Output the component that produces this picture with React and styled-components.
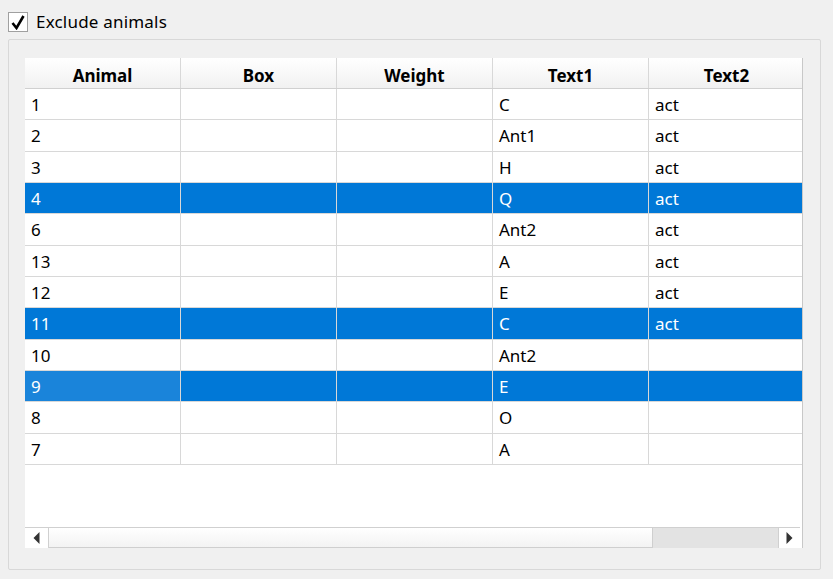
import React from "react";
import styled, { createGlobalStyle } from "styled-components";

const GlobalStyle = createGlobalStyle`
  body {
    margin: 0;
    background: #f0f0f0;
    font-family: "Noto Sans", "Open Sans", sans-serif;
    color: #000;
  }
`;

const columns = ["Animal", "Box", "Weight", "Text1", "Text2"];

const rows = [
  { animal: "1", text1: "C", text2: "act" },
  { animal: "2", text1: "Ant1", text2: "act" },
  { animal: "3", text1: "H", text2: "act" },
  { animal: "4", text1: "Q", text2: "act", selected: true },
  { animal: "6", text1: "Ant2", text2: "act" },
  { animal: "13", text1: "A", text2: "act" },
  { animal: "12", text1: "E", text2: "act" },
  { animal: "11", text1: "C", text2: "act", selected: true },
  { animal: "10", text1: "Ant2", text2: "" },
  { animal: "9", text1: "E", text2: "", selected: true, current: true },
  { animal: "8", text1: "O", text2: "" },
  { animal: "7", text1: "A", text2: "" },
];

const App = () => {
  return (
    <Window>
      <GlobalStyle />
      <CheckRow>
        <CheckBox>
          <svg width="14" height="15" viewBox="0 0 14 15">
            <path
              d="M1.5 8 L5.5 13 L12.5 1"
              fill="none"
              stroke="#000"
              strokeWidth="2.6"
            />
          </svg>
        </CheckBox>
        <CheckLabel>Exclude animals</CheckLabel>
      </CheckRow>
      <GroupBox>
        <Table>
          <HeaderRow>
            {columns.map((c) => (
              <HeaderCell key={c}>{c}</HeaderCell>
            ))}
          </HeaderRow>
          <Body>
            {rows.map((r, i) => (
              <Row key={i} $selected={r.selected}>
                <Cell $current={r.current}>{r.animal}</Cell>
                <Cell />
                <Cell />
                <Cell>{r.text1}</Cell>
                <Cell>{r.text2}</Cell>
              </Row>
            ))}
          </Body>
          <ScrollBar>
            <ArrowButton>
              <svg width="7" height="12" viewBox="0 0 7 12">
                <path d="M6.5 0 L0.5 6 L6.5 12 Z" fill="#333" />
              </svg>
            </ArrowButton>
            <Thumb />
            <Track />
            <ArrowButton $right>
              <svg width="7" height="12" viewBox="0 0 7 12">
                <path d="M0.5 0 L6.5 6 L0.5 12 Z" fill="#333" />
              </svg>
            </ArrowButton>
          </ScrollBar>
        </Table>
      </GroupBox>
    </Window>
  );
};

export default App;

const Window = styled.div`
  width: 833px;
  height: 579px;
  box-sizing: border-box;
  padding: 12px 0 0 8px;
  display: flex;
  flex-direction: column;
  overflow: hidden;
`;

const CheckRow = styled.div`
  display: flex;
  align-items: center;
  gap: 8px;
  height: 20px;
`;

const CheckBox = styled.div`
  width: 20px;
  height: 20px;
  box-sizing: border-box;
  border: 1px solid #a0a0a0;
  background: #fff;
  display: flex;
  align-items: center;
  justify-content: center;
`;

const CheckLabel = styled.span`
  font-size: 17px;
  letter-spacing: 0.2px;
  margin-top: -1px;
`;

const GroupBox = styled.div`
  margin-top: 7px;
  width: 813px;
  height: 531px;
  box-sizing: border-box;
  border: 1px solid #d8d8d8;
  border-radius: 2px;
  padding: 18px 17px 21px 16px;
  display: flex;
`;

const Table = styled.div`
  flex: 1;
  background: #fff;
  display: flex;
  flex-direction: column;
  overflow: hidden;
  border-right: 1px solid #c8c8c8;
`;

const HeaderRow = styled.div`
  display: grid;
  grid-template-columns: repeat(5, 156px);
  height: 31px;
  box-sizing: border-box;
  border-bottom: 1px solid #d0d0d0;
  background: linear-gradient(#ffffff, #f1f1f1);
  flex-shrink: 0;
`;

const HeaderCell = styled.div`
  display: flex;
  align-items: center;
  justify-content: center;
  padding-top: 5px;
  font-weight: bold;
  font-size: 17px;
  border-right: 1px solid #d8d8d8;
`;

const Body = styled.div`
  flex: 1;
`;

const Row = styled.div`
  display: grid;
  grid-template-columns: repeat(5, 156px);
  height: 31.33px;
  box-sizing: border-box;
  border-bottom: 1px solid #d8d8d8;
  background: ${(p) => (p.$selected ? "#0078d7" : "#fff")};
  color: ${(p) => (p.$selected ? "#fff" : "#000")};
`;

const Cell = styled.div`
  display: flex;
  align-items: center;
  padding: 1px 0 0 6px;
  font-size: 17px;
  border-right: 1px solid #d8d8d8;
  background: ${(p) => (p.$current ? "#1a84da" : "transparent")};
`;

const ScrollBar = styled.div`
  display: flex;
  height: 21px;
  box-sizing: border-box;
  border-top: 1px solid #d0d0d0;
  margin-right: 2px;
  flex-shrink: 0;
`;

const ArrowButton = styled.div`
  width: ${(p) => (p.$right ? "22px" : "24px")};
  box-sizing: border-box;
  display: flex;
  align-items: center;
  justify-content: center;
  background: #fff;
  border-right: ${(p) => (p.$right ? "none" : "1px solid #d0d0d0")};
  border-left: ${(p) => (p.$right ? "1px solid #d0d0d0" : "none")};
`;

const Thumb = styled.div`
  width: 604px;
  box-sizing: border-box;
  background: linear-gradient(#ffffff, #f3f3f3);
  border-right: 1px solid #cfcfcf;
  border-bottom: 1px solid #cfcfcf;
`;

const Track = styled.div`
  flex: 1;
  background: #e3e3e3;
`;
